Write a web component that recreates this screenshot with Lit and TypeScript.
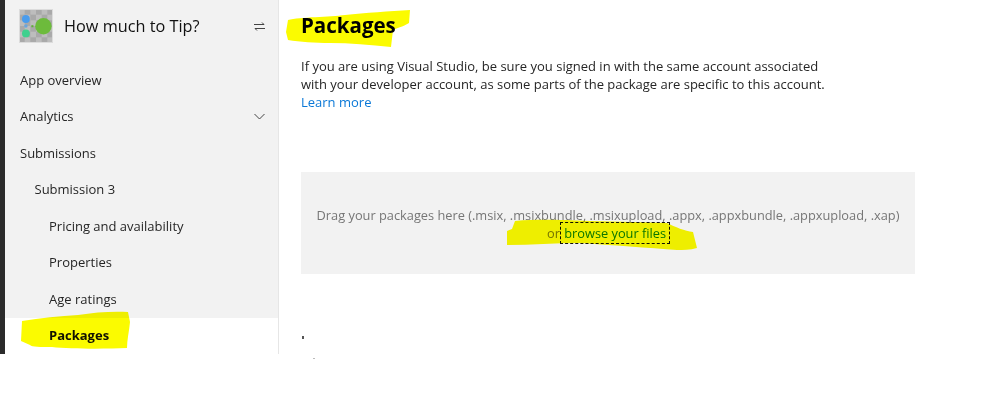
import { LitElement, css, html, svg } from 'lit';
import { customElement } from 'lit/decorators.js';

const NAV = [
  { label: 'App overview', level: 0 },
  { label: 'Analytics', level: 0, chevron: true },
  { label: 'Submissions', level: 0 },
  { label: 'Submission 3', level: 1 },
  { label: 'Pricing and availability', level: 2 },
  { label: 'Properties', level: 2 },
  { label: 'Age ratings', level: 2 },
  { label: 'Packages', level: 2, selected: true },
];

// marker strokes drawn by hand over the screenshot
const MARKS = [
  'M22 321 C40 318 60 316 78 315 C95 312 115 311 128 312 L130 322 C129 332 127 340 127 348 C105 349 70 349 52 347 C40 347 32 347 30 345 L21 341 Z',
  'M288 20 C300 17 330 17 345 15 C365 13 390 11 410 10 L409 23 C403 27 396 28 393 30 L391 47 C370 45 350 43 330 43 C315 43 300 42 288 40 L286 32 Z',
  'M515 221 C540 219 560 220 590 221 C620 222 645 222 667 223 C675 227 685 231 693 232 L697 248 C690 250 683 250 677 250 C650 248 610 245 580 243 C555 243 530 245 507 245 L507 231 L512 229 Z',
];

@customElement('app-root')
export class AppRoot extends LitElement {
  static styles = css`
    :host {
      display: block;
      position: relative;
      width: 998px;
      height: 401px;
      overflow: hidden;
      background: #fff;
      font-family: 'Open Sans', 'Noto Sans', sans-serif;
      font-size: 13px;
      color: #262626;
    }
    .page {
      display: flex;
      height: 354px;
    }
    .rail {
      width: 5px;
      background: #2b2b2b;
    }
    .side {
      width: 273px;
      background: #f2f2f2;
      border-right: 1px solid #e6e6e6;
      display: flex;
      flex-direction: column;
    }
    .app {
      height: 61.7px;
      box-sizing: border-box;
      flex: none;
      display: flex;
      align-items: center;
      padding: 0 13px 9px 14px;
      gap: 11px;
      font-size: 16.3px;
      font-weight: 500;
      color: #111;
    }
    .app .name {
      flex: 1;
    }
    .logo {
      display: block;
      flex: none;
    }
    .nav {
      display: flex;
      flex-direction: column;
    }
    .item {
      height: 36.5px;
      display: flex;
      align-items: center;
      justify-content: space-between;
      padding-right: 13px;
    }
    .l0 { padding-left: 15px; }
    .l1 { padding-left: 29.5px; }
    .l2 { padding-left: 44px; }
    .item.selected {
      background: linear-gradient(#f2f2f2 1px, #fff 1px);
      font-weight: 700;
      color: #111;
    }
    .main {
      flex: 1;
      padding: 11px 0 0 22px;
    }
    h1 {
      margin: 0;
      font-size: 20.5px;
      line-height: 28px;
      font-weight: 700;
      color: #000;
    }
    p {
      margin: 18px 0 0;
      width: 540px;
      line-height: 18px;
    }
    a {
      color: #0a78d7;
      text-decoration: none;
    }
    .learn {
      display: block;
      width: max-content;
      line-height: 18px;
    }
    .drop {
      margin-top: 61px;
      width: 614px;
      height: 102px;
      box-sizing: border-box;
      padding-top: 34px;
      background: #f2f2f2;
      text-align: center;
      color: #767676;
      line-height: 18px;
      font-size: 12.8px;
    }
    .browse {
      outline: 1px dashed #111;
      padding: 1px 3px;
      margin-left: -2px;
      color: #0a78d7;
    }
    .marks {
      position: absolute;
      inset: 0;
      mix-blend-mode: multiply;
      pointer-events: none;
    }
    .speck {
      position: absolute;
      left: 302px;
      top: 336px;
      width: 2px;
      height: 3px;
      background: #555;
    }
    .speck.faint {
      left: 313px;
      top: 358px;
      height: 1px;
      background: #bbb;
    }
  `;

  private logo() {
    const cells = [];
    for (let y = 0; y < 6; y++) {
      for (let x = 0; x < 6; x++) {
        if ((x + y) % 2 === 0) {
          cells.push(svg`<rect x=${x * 5.5} y=${y * 5.5} width="5.5" height="5.5" fill="#bdbdbd"/>`);
        }
      }
    }
    return html`<svg class="logo" width="34" height="34" viewBox="0 0 33 33">
      <rect width="33" height="33" fill="#a9a9a9"/>
      ${cells}
      <rect x=".5" y=".5" width="32" height="32" fill="none" stroke="#dcdcdc"/>
      <circle cx="6.7" cy="9.7" r="3.8" fill="#4a9cec"/>
      <circle cx="6.7" cy="16.4" r="1.7" fill="#6aa5dd"/>
      <circle cx="6.7" cy="23.7" r="3.8" fill="#3fd08e"/>
      <rect x="12" y="15.7" width="2" height="2" fill="#5fae3a"/>
      <circle cx="23.7" cy="16.7" r="8" fill="#6dbb3c"/>
    </svg>`;
  }

  private swap() {
    return html`<svg width="11" height="9" viewBox="0 0 11 9" fill="none" stroke="#444" stroke-width="1">
      <path d="M0 2.5H10M8 .5L10 2.5"/>
      <path d="M11 6.5H1M3 8.5L1 6.5"/>
    </svg>`;
  }

  private chevron() {
    return html`<svg width="11" height="7" viewBox="0 0 11 7" fill="none" stroke="#444" stroke-width="1">
      <path d="M.5 1L5.5 6L10.5 1"/>
    </svg>`;
  }

  render() {
    return html`
      <div class="page">
        <div class="rail"></div>
        <aside class="side">
          <div class="app">
            ${this.logo()}
            <span class="name">How much to Tip?</span>
            ${this.swap()}
          </div>
          <nav class="nav">
            ${NAV.map((n) => html`
              <div class="item l${n.level} ${n.selected ? 'selected' : ''}">
                <span>${n.label}</span>
                ${n.chevron ? this.chevron() : ''}
              </div>
            `)}
          </nav>
        </aside>
        <main class="main">
          <h1>Packages</h1>
          <p>
            If you are using Visual Studio, be sure you signed in with the same account associated
            with your developer account, as some parts of the package are specific to this account.
          </p>
          <a class="learn" href="#">Learn more</a>
          <div class="drop">
            Drag your packages here (.msix, .msixbundle, .msixupload, .appx, .appxbundle, .appxupload, .xap)<br />
            or <a class="browse" href="#">browse your files</a>
          </div>
        </main>
      </div>
      <div class="speck"></div>
      <div class="speck faint"></div>
      <svg class="marks" width="998" height="401">
        ${MARKS.map((d) => svg`<path d=${d} fill="#fbfb00"/>`)}
      </svg>
    `;
  }
}
